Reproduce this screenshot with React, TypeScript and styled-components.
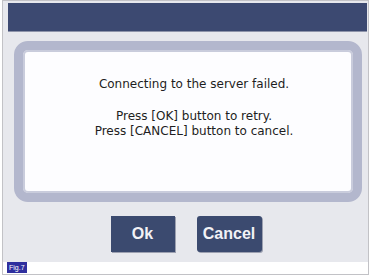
import React from "react";
import styled, { createGlobalStyle } from "styled-components";

const Global = createGlobalStyle`
  html, body { margin: 0; padding: 0; background: #ffffff; }
  body { font-family: "DejaVu Sans", "Liberation Sans", sans-serif; }
`;

const Frame = styled.div`
  margin-left: 2px;
  width: 367px;
  height: 275px;
  box-sizing: border-box;
  border: 1px solid #c2c2c6;
  display: flex;
  flex-direction: column;
`;

const Screen = styled.div`
  height: 261px;
  box-sizing: border-box;
  background: #e7e8ed;
  padding: 2px 1px 0 5px;
  display: flex;
  flex-direction: column;
`;

const Header = styled.div`
  height: 29px;
  background: #3c4971;
  border-bottom: 1px solid #8e94aa;
  box-sizing: border-box;
`;

const Panel = styled.div`
  margin: 9px 5px 0 6px;
  height: 161px;
  box-sizing: border-box;
  border: 9px solid #b3b7cd;
  border-radius: 14px;
  background: #fdfdff;
  box-shadow: inset 0 0 0 2px #c9ccdc;
  display: flex;
  flex-direction: column;
  align-items: center;
  padding: 27px 0 0 12px;
  color: #1e1e22;
  font-size: 12px;
  line-height: 15px;
`;

const Line = styled.div<{ $gap?: number }>`
  margin-top: ${(p) => p.$gap ?? 0}px;
  white-space: nowrap;
`;

const Buttons = styled.div`
  margin-top: 14px;
  display: flex;
  justify-content: center;
  gap: 22px;
  padding-right: 3px;
`;

const Button = styled.button<{ $w: number; $r: number }>`
  width: ${(p) => p.$w}px;
  height: 36px;
  border: none;
  border-radius: ${(p) => p.$r}px;
  background: #3b4a6f;
  color: #f2f2f6;
  font-family: "Liberation Sans", Arial, sans-serif;
  font-weight: bold;
  font-size: 16px;
  padding: 0;
  box-shadow: 1px 1px 0 #9ca0b0;
`;

const Footer = styled.div`
  height: 12px;
  padding-left: 4px;
  display: flex;
  align-items: flex-start;
`;

const FigTag = styled.div`
  background: #2f2f9e;
  color: #ffffff;
  font-family: "Liberation Sans", Arial, sans-serif;
  font-size: 7px;
  line-height: 11px;
  height: 11px;
  padding: 0 2px;
`;

export default function App() {
  return (
    <>
      <Global />
      <Frame>
        <Screen>
          <Header />
          <Panel>
            <Line>Connecting to the server failed.</Line>
            <Line $gap={17}>Press [OK] button to retry.</Line>
            <Line>Press [CANCEL] button to cancel.</Line>
          </Panel>
          <Buttons>
            <Button $w={64} $r={0}>Ok</Button>
            <Button $w={65} $r={3}>Cancel</Button>
          </Buttons>
        </Screen>
        <Footer>
          <FigTag>Fig.7</FigTag>
        </Footer>
      </Frame>
    </>
  );
}
